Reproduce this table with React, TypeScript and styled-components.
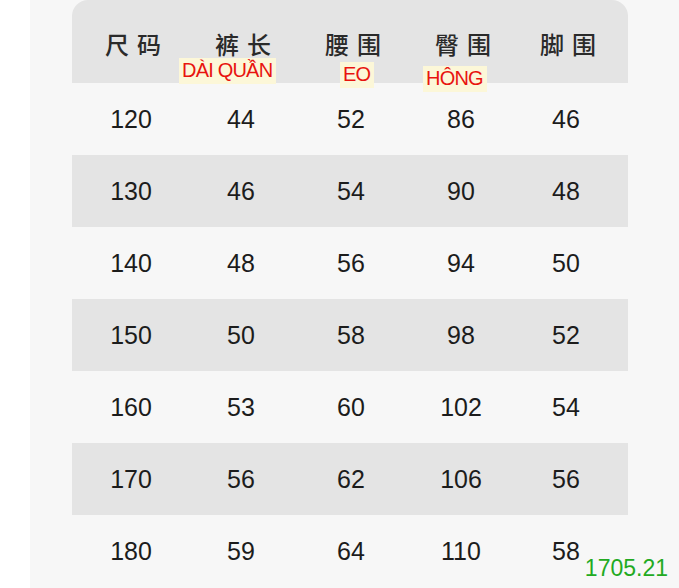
import React from "react";
import styled, { createGlobalStyle } from "styled-components";

const GlobalStyle = createGlobalStyle`
  html, body {
    margin: 0;
    padding: 0;
    background: #ffffff;
  }
  body {
    font-family: "Liberation Sans", Arial, sans-serif;
  }
`;

const headers = ["尺码", "裤长", "腰围", "臀围", "脚围"];

const rows: number[][] = [
  [120, 44, 52, 86, 46],
  [130, 46, 54, 90, 48],
  [140, 48, 56, 94, 50],
  [150, 50, 58, 98, 52],
  [160, 53, 60, 102, 54],
  [170, 56, 62, 106, 56],
  [180, 59, 64, 110, 58],
];

const labels = [
  { text: "DÀI QUẦN", left: 107, top: 58 },
  { text: "EO", left: 268, top: 62 },
  { text: "HÔNG", left: 351, top: 66 },
];

export default function App() {
  return (
    <>
      <GlobalStyle />
      <Page>
        <Panel>
          <Table>
            <HeaderRow>
              {headers.map((h) => (
                <HeaderCell key={h}>{h}</HeaderCell>
              ))}
              {labels.map((l) => (
                <Label key={l.text} $left={l.left} $top={l.top}>
                  {l.text}
                </Label>
              ))}
            </HeaderRow>
            {rows.map((r, i) => (
              <Row key={r[0]} $shaded={i % 2 === 1}>
                {r.map((v, j) => (
                  <Cell key={j}>{v}</Cell>
                ))}
              </Row>
            ))}
          </Table>
          <Stamp>1705.21</Stamp>
        </Panel>
      </Page>
    </>
  );
}

const Page = styled.div`
  width: 679px;
  height: 588px;
  overflow: hidden;
  padding-left: 30px;
  box-sizing: border-box;
`;

const Panel = styled.div`
  position: relative;
  height: 100%;
  background: #f7f7f7;
  padding-left: 42px;
`;

const Table = styled.div`
  width: 556px;
`;

const columns = "118px 102px 118px 102px 108px 8px";

const HeaderRow = styled.div`
  position: relative;
  display: grid;
  grid-template-columns: ${columns};
  height: 83px;
  align-items: center;
  background: #e4e4e4;
  border-radius: 16px 16px 0 0;
`;

const HeaderCell = styled.div`
  text-align: center;
  font-family: "Noto Sans CJK SC", sans-serif;
  font-size: 24px;
  font-weight: 500;
  color: #2a2a2a;
  letter-spacing: 8px;
  padding-left: 12px;
  margin-top: 4px;
`;

const Label = styled.span<{ $left: number; $top: number }>`
  position: absolute;
  left: ${(p) => p.$left}px;
  top: ${(p) => p.$top}px;
  padding: 1px 4px 2px 3px;
  background: #fcf7d8;
  color: #e8140f;
  font-family: "Liberation Sans", Arial, sans-serif;
  font-size: 20px;
  line-height: 23px;
  letter-spacing: -0.8px;
`;

const Row = styled.div<{ $shaded: boolean }>`
  display: grid;
  grid-template-columns: ${columns};
  height: 72px;
  align-items: center;
  background: ${(p) => (p.$shaded ? "#e4e4e4" : "#f7f7f7")};
`;

const Cell = styled.div`
  text-align: center;
  font-size: 25px;
  color: #1c1c1c;
`;

const Stamp = styled.div`
  position: absolute;
  right: 11px;
  bottom: 6px;
  color: #22aa22;
  font-size: 23px;
`;
